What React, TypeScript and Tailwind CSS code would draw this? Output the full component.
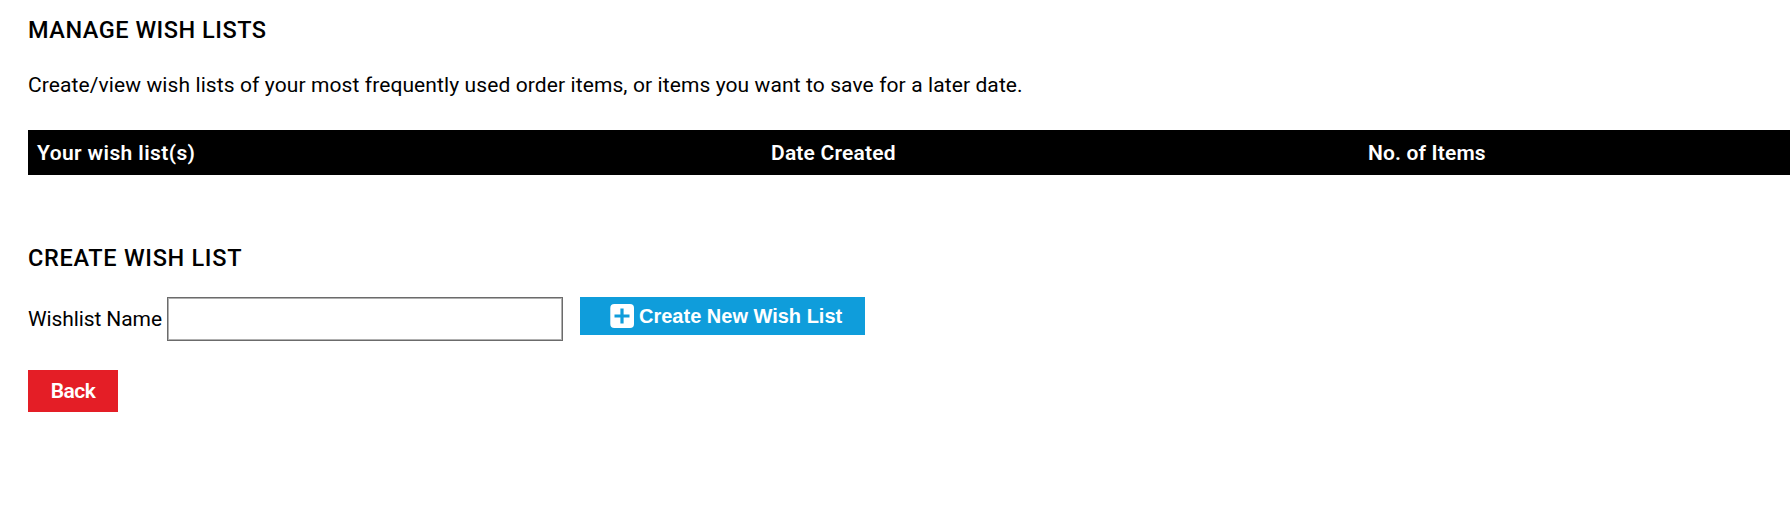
const columns = [
  { label: 'Your wish list(s)', tracking: 'tracking-[0.4px] pl-px' },
  { label: 'Date Created', tracking: 'tracking-[0.2px]' },
  { label: 'No. of Items', tracking: 'tracking-[0.15px] pl-px' },
];

function PlusSquare() {
  return (
    <svg width="24" height="24" viewBox="0 0 24 24" aria-hidden="true">
      <rect x="0.3" width="23.7" height="24" rx="4" fill="#ffffff" />
      <path d="M12 4.5v15M4.5 12h15" stroke="#0f9ddb" strokeWidth="3.2" />
    </svg>
  );
}

export default function App() {
  return (
    <main className="h-[522px] overflow-hidden bg-white pl-7 font-['Roboto',sans-serif] text-[21px] leading-[30px] text-black">
      <h1 className="pt-[14px] text-[23.5px] leading-8 font-medium whitespace-nowrap">
        <span className="tracking-[0.52px]">MANAGE WISH LISTS</span>
      </h1>
      <p className="mt-[24px] whitespace-nowrap">
        <span className="tracking-[0.1px]">
          Create/view wish lists of your most frequently used order items, or items you want to save for a later date.
        </span>
      </p>
      <div className="mt-[30px] grid h-[45px] grid-cols-[735px_596px_1fr] items-center bg-black font-semibold text-white">
        {columns.map((c) => (
          <div key={c.label} className="px-2 whitespace-nowrap">
            <span className={c.tracking}>{c.label}</span>
          </div>
        ))}
      </div>
      <h2 className="mt-[67px] text-[23.5px] leading-8 font-medium whitespace-nowrap">
        <span className="tracking-[0.7px]">CREATE WISH LIST</span>
      </h2>
      <div className="mt-[23px] flex h-11 items-start">
        <label htmlFor="wish" className="w-[139px] pt-[7px] whitespace-nowrap">
          <span className="tracking-[-0.1px]">Wishlist Name</span>
        </label>
        <input
          id="wish"
          className="h-11 w-[396px] border border-[#6b6b6b] bg-white px-2 inset-ring inset-ring-[#b0b0b0] outline-none"
        />
        <button className="ml-[17px] flex h-[38px] w-[285px] items-center bg-[#0f9ddb] pl-[30px] font-['Liberation_Sans',sans-serif] text-xl font-bold whitespace-nowrap text-white">
          <PlusSquare />
          <span className="ml-[5px]">Create New Wish List</span>
        </button>
      </div>
      <button className="mt-[29px] flex h-[42px] w-[90px] items-center justify-center bg-[#e41e26] font-semibold text-white">
        <span className="tracking-[-0.5px]">Back</span>
      </button>
    </main>
  );
}
